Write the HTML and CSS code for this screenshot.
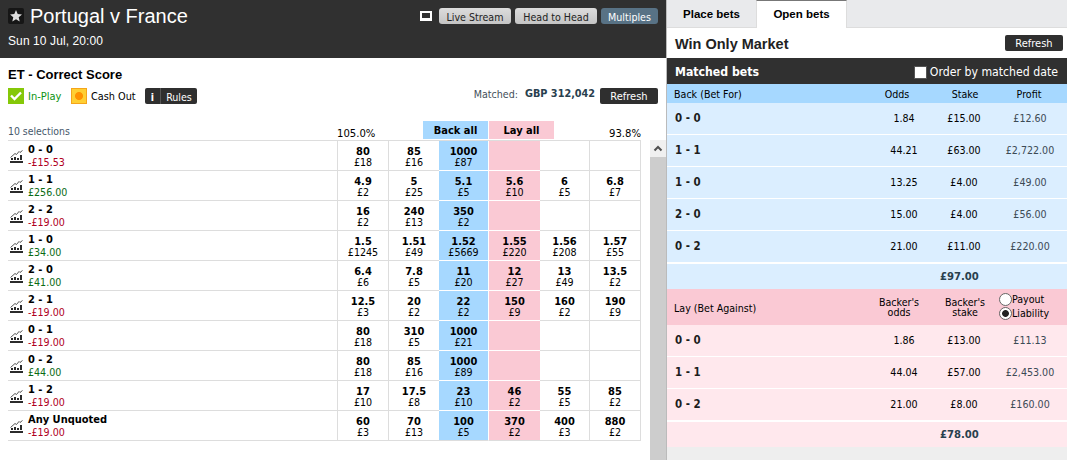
FILE: index.html
```
<!DOCTYPE html>
<html lang="en">
<head>
  <meta charset="UTF-8" />
  <title>Portugal v France - Correct Score</title>
  <link rel="stylesheet" href="styles.css">
</head>
<body>

  <!-- Chart icon, used once per runner -->
  <svg class="defs" width="0" height="0">
    <symbol id="chart" viewBox="0 0 13 13">
      <path d="M0.5 7.5 L5 3.5 L6.5 4.5 L9 1.5 L10 2.5 L12.5 0.5" fill="none" stroke="#444" stroke-width="0.9" />
      <path d="M1 8h2v2H1zM4 7h2v3H4zM7 8h2v2H7zM10 5h2v5h-2zM0 11h13v2H0z" fill="#2b2b2b" shape-rendering="crispEdges" />
    </symbol>
  </svg>

  <div class="page">
    <!-- Market -->
    <div class="market">
      <div class="event-header">
        <div class="event-row">
          <span class="star">
            <svg width="16" height="16" viewBox="0 0 16 16"><path d="M8 2l1.7 4.1 4.3.3-3.3 2.8 1 4.3L8 11.2l-3.7 2.3 1-4.3L2 6.4l4.3-.3z" fill="#ddd" /></svg>
          </span>
          <h1>Portugal v France</h1>
          <div class="event-links">
            <span class="tv"></span>
            <a class="btn btn-live">Live Stream</a>
            <a class="btn btn-head">Head to Head</a>
            <a class="btn btn-multi">Multiples</a>
          </div>
        </div>
        <div class="event-date">Sun 10 Jul, 20:00</div>
      </div>

      <div class="market-info">
        <h2>ET - Correct Score</h2>
        <div class="market-tools">
          <svg class="tool-icon" width="16" height="16" viewBox="0 0 16 16">
            <rect width="16" height="16" fill="#85c808" />
            <path d="M3 7.5l3.5 3.5L13 4.5" fill="none" stroke="#fff" stroke-width="2.4" />
          </svg>
          <span class="in-play">In-Play</span>
          <span class="cash-icon"></span>
          <span class="cash-out">Cash Out</span>
          <a class="rules"><b>i</b><span>Rules</span></a>
          <span class="matched">Matched:</span>
          <b class="matched-total">GBP 312,042</b>
          <a class="btn-dark">Refresh</a>
        </div>
      </div>

      <div class="market-head">
        <span class="selections">10 selections</span>
        <span class="book-back">105.0%</span>
        <b class="back-all">Back all</b>
        <b class="lay-all">Lay all</b>
        <span class="book-lay">93.8%</span>
      </div>

      <div class="market-body">
        <div class="runners" id="runners"></div>
        <div class="scrollbar">
          <div class="scroll-up"><svg width="16" height="16" viewBox="0 0 16 16"><path d="M4.5 10.5L8 7 11.5 10.5" fill="none" stroke="#505050" stroke-width="2" /></svg></div>
        </div>
      </div>
    </div>

    <!-- Bets -->
    <div class="bets">
      <div class="tabs">
        <a class="tab">Place bets</a>
        <a class="tab active">Open bets</a>
      </div>
      <div class="bets-title">
        <h3>Win Only Market</h3>
        <a class="btn-dark">Refresh</a>
      </div>
      <div class="bets-bar">
        <b>Matched bets</b>
        <span class="checkbox"></span>
        <span class="order-by">Order by matched date</span>
      </div>

      <div class="bet-row bet-head back-head">
        <span>Back (Bet For)</span><span>Odds</span><span>Stake</span><span>Profit</span>
      </div>
      <div class="back-bets" id="back-bets"></div>
      <div class="bet-total back-total">£97.00</div>

      <div class="bet-row bet-head lay-head">
        <span>Lay (Bet Against)</span>
        <span>Backer's<br>odds</span>
        <span>Backer's<br>stake</span>
        <div class="radios">
          <div><i class="radio"></i>Payout</div>
          <div><i class="radio on"></i>Liability</div>
        </div>
      </div>
      <div class="lay-bets" id="lay-bets"></div>
      <div class="bet-total lay-total">£78.00</div>
    </div>
  </div>

  <script>
    // name, profit/loss, then price/size: 3 back, 3 lay
    const runners = [
      ["0 - 0", "-£15.53", "80/18", "85/16", "1000/87", "", "", ""],
      ["1 - 1", "£256.00", "4.9/2", "5/25", "5.1/5", "5.6/10", "6/5", "6.8/7"],
      ["2 - 2", "-£19.00", "16/2", "240/13", "350/2", "", "", ""],
      ["1 - 0", "£34.00", "1.5/1245", "1.51/49", "1.52/5669", "1.55/220", "1.56/208", "1.57/55"],
      ["2 - 0", "£41.00", "6.4/6", "7.8/5", "11/20", "12/27", "13/49", "13.5/2"],
      ["2 - 1", "-£19.00", "12.5/3", "20/2", "22/2", "150/9", "160/2", "190/9"],
      ["0 - 1", "-£19.00", "80/18", "310/5", "1000/21", "", "", ""],
      ["0 - 2", "£44.00", "80/18", "85/16", "1000/89", "", "", ""],
      ["1 - 2", "-£19.00", "17/10", "17.5/8", "23/10", "46/2", "55/5", "85/2"],
      ["Any Unquoted", "-£19.00", "60/3", "70/13", "100/5", "370/2", "400/3", "880/2"]
    ];

    const backBets = [
      ["0 - 0", "1.84", "£15.00", "£12.60"],
      ["1 - 1", "44.21", "£63.00", "£2,722.00"],
      ["1 - 0", "13.25", "£4.00", "£49.00"],
      ["2 - 0", "15.00", "£4.00", "£56.00"],
      ["0 - 2", "21.00", "£11.00", "£220.00"]
    ];

    const layBets = [
      ["0 - 0", "1.86", "£13.00", "£11.13"],
      ["1 - 1", "44.04", "£57.00", "£2,453.00"],
      ["0 - 2", "21.00", "£8.00", "£160.00"]
    ];

    const cellClass = ["", "", "best-back", "best-lay", "plain", "last"];

    document.getElementById("runners").innerHTML = runners.map(([name, pl, ...prices]) => {
      const cells = prices.map((p, i) => {
        const [odds, size] = p.split("/");
        return `<div class="price ${cellClass[i]}">${p ? `<b>${odds}</b><span>£${size}</span>` : ""}</div>`;
      }).join("");
      return `<div class="runner">
        <div class="runner-name">
          <svg width="13" height="13"><use href="#chart" /></svg>
          <div><b>${name}</b><span class="${pl[0] === "-" ? "loss" : "win"}">${pl}</span></div>
        </div>${cells}
      </div>`;
    }).join("");

    function betRows(id, bets) {
      document.getElementById(id).innerHTML = bets.map(b =>
        `<div class="bet-row"><b>${b[0]}</b><span>${b[1]}</span><span>${b[2]}</span><span class="profit">${b[3]}</span></div>`
      ).join("");
    }

    betRows("back-bets", backBets);
    betRows("lay-bets", layBets);
  </script>
</body>
</html>
```
FILE: styles.css
```
* {
  box-sizing: border-box;
}

body {
  margin: 0;
  overflow: hidden;
  background: #fff;
  color: #000;
  font-family: "DejaVu Sans Condensed", "DejaVu Sans", sans-serif;
  font-stretch: condensed;
  font-size: 10.6px;
  white-space: nowrap;
}

h1, h2, h3 {
  margin: 0;
}

.defs {
  position: absolute;
}

.page {
  display: flex;
  width: 1067px;
  height: 460px;
}

/* ---- market ---- */

.market {
  width: 666px;
  display: flex;
  flex-direction: column;
}

.event-header {
  height: 58px;
  padding: 4px 8px 0;
  background: #303030;
  color: #fff;
  font-family: "Liberation Sans", Arial, sans-serif;
}

.event-row {
  display: flex;
  height: 24px;
}

.star {
  width: 16px;
  height: 16px;
  margin: 4px 6px 0 0;
  background: #161616;
  border-radius: 2px;
}

.star svg {
  display: block;
}

h1 {
  font-size: 20px;
  line-height: 24px;
  font-weight: normal;
}

.event-links {
  display: flex;
  gap: 4px;
  margin: 4px 0 0 auto;
  font-family: "DejaVu Sans Condensed", "DejaVu Sans", sans-serif;
}

.tv {
  width: 12px;
  height: 10px;
  margin: 3px 3px 0 0;
  border: 2px solid #fff;
  border-bottom-width: 3px;
}

.btn {
  height: 16px;
  line-height: 18px;
  border-radius: 3px;
  background: linear-gradient(#dcdcdc, #c4c4c4);
  color: #222;
  font-size: 10.6px;
  text-align: center;
}

.btn-live {
  width: 72px;
}

.btn-head {
  width: 82px;
}

.btn-multi {
  width: 57px;
  background: #587285;
  color: #fff;
}

.event-date {
  margin-top: 6px;
  font-size: 12px;
  line-height: 14px;
  letter-spacing: 0.1px;
}

.market-info {
  height: 63px;
  padding: 9px 8px 0;
}

h2 {
  font: bold 13px/15px "Liberation Sans", Arial, sans-serif;
}

.market-tools {
  display: flex;
  height: 22px;
  margin-top: 6px;
  line-height: 18px;
}

.in-play {
  width: 43px;
  padding-left: 4px;
  color: #0b9310;
  font-size: 11px;
}

.cash-icon {
  width: 16px;
  height: 16px;
  margin-left: 4px;
  border: 1px solid #f5a51a;
  background: radial-gradient(circle, #ff9100 0 3.6px, #ffcf33 4.4px);
}

.cash-out {
  width: 58px;
  padding-left: 4px;
  font-size: 10.8px;
}

.rules {
  display: flex;
  width: 52px;
  height: 16px;
  border-radius: 2px;
  background: #2f2f2f;
  color: #fff;
}

.rules b {
  width: 16px;
  border-right: 1px solid #555;
  text-align: center;
}

.rules span {
  flex: 1;
  text-align: center;
}

.matched {
  margin: -3px 7px 0 auto;
  color: #444f59;
}

.matched-total {
  width: 75px;
  margin-top: -3px;
  color: #29404e;
  font-size: 10.8px;
}

.btn-dark {
  width: 58px;
  height: 16px;
  line-height: 18px;
  border-radius: 2px;
  background: #2f2f2f;
  color: #fff;
  font-size: 11px;
  text-align: center;
}

.market-head {
  display: flex;
  height: 19px;
  padding-left: 8px;
}

.selections {
  width: 329px;
  padding-top: 4px;
  color: #46586b;
  font-size: 10.4px;
}

.book-back {
  width: 86px;
  padding-top: 6px;
  font-size: 11.2px;
}

.back-all,
.lay-all {
  width: 65px;
  height: 18px;
  line-height: 19px;
  margin-right: 1px;
  background: #a6d8ff;
  font-size: 11px;
  text-align: center;
}

.lay-all {
  background: #fac9d4;
}

.book-lay {
  width: 86px;
  padding-top: 6px;
  font-size: 11.2px;
  text-align: right;
}

.market-body {
  display: flex;
  flex: 1;
}

.runners {
  width: 633px;
  height: 301px;
  margin: 0 9px 0 8px;
  border-top: 1px solid #ddd;
}

.runner {
  display: grid;
  grid-template-columns: 329px 51px 51px 50px 51px 49px 52px;
  height: 30px;
}

.runner-name {
  display: flex;
  padding: 3px 0 0 2px;
  border-bottom: 1px solid #ddd;
}

.runner-name svg {
  margin: 6px 5px 0 0;
}

.runner-name b,
.runner-name span {
  display: block;
  line-height: 12px;
}

.runner b {
  font-size: 11px;
}

.loss {
  color: #b0001e;
}

.win {
  color: #0a6b14;
}

.price {
  padding-top: 5px;
  border-left: 1px solid #ddd;
  border-bottom: 1px solid #ddd;
  text-align: center;
}

.price b,
.price span {
  display: block;
  line-height: 11px;
}

.best-back {
  border-left: 0;
  border-right: 1px solid #fff;
  border-bottom-color: #fff;
  background: #a6d8ff;
}

.best-lay {
  border-left: 0;
  border-bottom-color: #fff;
  background: #fac9d4;
}

.runner:last-child .price {
  border-bottom-color: #ddd;
}

.plain {
  border-left: 0;
}

.last {
  border-right: 1px solid #ddd;
}

.scrollbar {
  width: 16px;
  background: #cdcdcd;
}

.scroll-up {
  height: 17px;
  background: #f0f0f0;
}

/* ---- bets ---- */

.bets {
  flex: 1;
  border-left: 1px solid #bbb;
  background: #eee;
}

.tabs {
  display: flex;
  height: 28px;
  background: #e9eaec;
  border-bottom: 1px solid #ddd;
}

.tab {
  width: 89px;
  height: 27px;
  font: bold 11.5px/28px "Liberation Sans", Arial, sans-serif;
  text-align: center;
}

.tab.active {
  width: 91px;
  height: 28px;
  line-height: 26px;
  border: 1px solid #ddd;
  border-top-color: #777;
  border-bottom: 0;
  background: #fff;
}

.bets-title {
  display: flex;
  justify-content: space-between;
  height: 30px;
  padding: 7px 4px 0 8px;
  background: #fff;
}

h3 {
  font: bold 14.5px/18px "Liberation Sans", Arial, sans-serif;
  color: #222;
}

.bets-bar {
  display: flex;
  height: 26px;
  padding: 0 9px 0 8px;
  background: #303030;
  color: #fff;
  font-size: 12.2px;
  line-height: 29px;
}

.bets-bar b {
  margin-right: auto;
}

.checkbox {
  width: 13px;
  height: 13px;
  margin: 8px 3px 0 0;
  border: 1px solid #555;
  background: #fff;
}

.bet-row {
  display: grid;
  grid-template-columns: 206px 62px 58px 74px;
  height: 32px;
  line-height: 30px;
  border-bottom: 1px solid #fff;
  text-align: center;
}

.bet-row > :first-child {
  padding-left: 8px;
  text-align: left;
}

.bet-row b {
  font-size: 11.4px;
  color: #1d1d1d;
}

.profit {
  color: #3c4a55;
}

.back-bets,
.back-total {
  background: #dbeeff;
}

.lay-bets,
.lay-total {
  background: #ffe8ed;
}

.back-bets .bet-row:last-child,
.lay-bets .bet-row:last-child {
  height: 33px;
  border-bottom-width: 2px;
}

.bet-head {
  border: 0;
}

.bet-head > :first-child {
  padding-left: 7px;
}

.back-head {
  grid-template-columns: 200px 60px 76px 52px;
  height: 19px;
  line-height: 20px;
  background: #a6d8ff;
}

.lay-head {
  grid-template-columns: 199px 66px 66px 69px;
  height: 36px;
  line-height: 10px;
  padding-top: 8px;
  background: #fac9d4;
}

.lay-head > :first-child {
  line-height: 22px;
}

.radios {
  margin-top: -4px;
  padding-left: 1px;
}

.radios div {
  display: flex;
  height: 14px;
  line-height: 13px;
}

.radio {
  width: 13px;
  height: 13px;
  border: 1px solid #666;
  border-radius: 50%;
  background: #fff;
}

.radio.on {
  background: radial-gradient(circle, #222 0 3px, #fff 3.8px);
}

.bet-total {
  height: 25px;
  padding-left: 273px;
  color: #29404e;
  font-size: 11.2px;
  font-weight: bold;
  line-height: 26px;
}
```
